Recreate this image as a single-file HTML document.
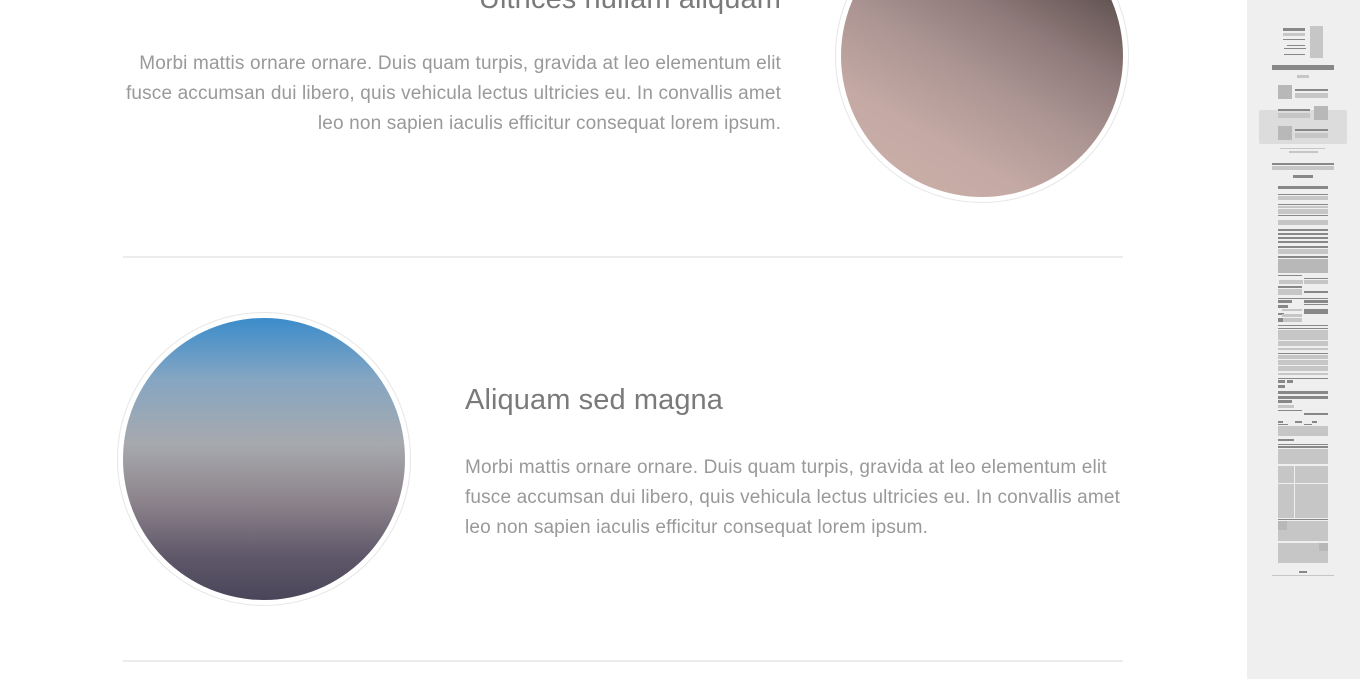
<!DOCTYPE html>
<html><head><meta charset="utf-8"><style>
html,body{margin:0;padding:0;width:1360px;height:679px;overflow:hidden;background:#fff;font-family:"Liberation Sans",Arial,sans-serif;}
.h{position:absolute;font-size:29px;color:#7a7a7a;line-height:34px;white-space:nowrap;margin:0;font-weight:normal;letter-spacing:0.1px}
.p{position:absolute;font-size:19px;color:#999;line-height:30px;white-space:nowrap;margin:0;letter-spacing:0.15px}
.hr{position:absolute;left:123px;width:1000px;height:2px;background:#ececec}
.c{position:absolute;width:294px;height:294px;border-radius:50%;border:1px solid #e6e6e6;background:#fff;box-sizing:border-box}
.c div{position:absolute;left:5px;top:5px;width:282px;height:282px;border-radius:50%}
#side{position:absolute;left:1247px;top:0;width:113px;height:679px;background:#efefef}
#side i{position:absolute;display:block}
.d{background:#888}.l{background:#c6c6c6}.m{background:#b8b8b8}
</style></head><body>
<h2 class="h" style="right:579px;top:-18px">Ultrices nullam aliquam</h2>
<p class="p" style="right:579px;top:49px;text-align:right">Morbi mattis ornare ornare. Duis quam turpis, gravida at leo elementum elit<br>fusce accumsan dui libero, quis vehicula lectus ultricies eu. In convallis amet<br>leo non sapien iaculis efficitur consequat lorem ipsum.</p>
<div class="c" style="left:835px;top:-91px"><div style="background:linear-gradient(210deg,#2c2422 0%,#5e504e 18%,#8e7a79 38%,#ab9492 55%,#c4a9a4 75%,#cdb1aa 100%)"></div></div>
<div class="hr" style="top:256px"></div>
<div class="c" style="left:117px;top:312px"><div style="background:linear-gradient(180deg,#3b8ccb 0%,#86a6c2 22%,#a7a9ad 45%,#8c838b 65%,#5e5769 85%,#4a4559 100%)"></div></div>
<h2 class="h" style="left:465px;top:383px">Aliquam sed magna</h2>
<p class="p" style="left:465px;top:453px">Morbi mattis ornare ornare. Duis quam turpis, gravida at leo elementum elit<br>fusce accumsan dui libero, quis vehicula lectus ultricies eu. In convallis amet<br>leo non sapien iaculis efficitur consequat lorem ipsum.</p>
<div class="hr" style="top:660px"></div>
<div id="side">
<i style="left:12px;top:110px;width:88px;height:34px;background:#dcdcdc;border-radius:2px"></i>
<i class="d" style="left:36px;top:28px;width:22px;height:3px"></i>
<i class="l" style="left:36px;top:33px;width:22px;height:3px"></i>
<i class="d" style="left:36px;top:39px;width:22px;height:1px"></i>
<i class="l" style="left:63px;top:26px;width:13px;height:32px"></i>
<i class="d" style="left:40px;top:45px;width:18px;height:1px"></i>
<i class="d" style="left:37px;top:48px;width:22px;height:1px"></i>
<i class="d" style="left:37px;top:54px;width:21px;height:1px"></i>
<i class="d" style="left:25px;top:65px;width:62px;height:5px"></i>
<i class="l" style="left:50px;top:75px;width:12px;height:3px"></i>
<i class="m" style="left:31px;top:85px;width:14px;height:14px"></i>
<i class="d" style="left:48px;top:89px;width:33px;height:2px"></i>
<i class="l" style="left:48px;top:93px;width:33px;height:5px"></i>
<i class="d" style="left:31px;top:109px;width:32px;height:2px"></i>
<i class="l" style="left:31px;top:113px;width:32px;height:5px"></i>
<i class="m" style="left:67px;top:106px;width:14px;height:14px"></i>
<i class="m" style="left:31px;top:126px;width:14px;height:14px"></i>
<i class="d" style="left:48px;top:129px;width:33px;height:2px"></i>
<i class="l" style="left:48px;top:133px;width:33px;height:5px"></i>
<i class="l" style="left:33px;top:148px;width:45px;height:1px"></i>
<i class="l" style="left:42px;top:151px;width:29px;height:2px"></i>
<i class="d" style="left:25px;top:163px;width:62px;height:2px"></i>
<i class="l" style="left:25px;top:166px;width:62px;height:4px"></i>
<i class="d" style="left:46px;top:175px;width:20px;height:3px"></i>
<i class="d" style="left:31px;top:186px;width:50px;height:3px"></i>
<i class="d" style="left:31px;top:194px;width:50px;height:1px"></i>
<i class="l" style="left:31px;top:196px;width:50px;height:4px"></i>
<i class="d" style="left:31px;top:204px;width:50px;height:1px"></i>
<i class="l" style="left:31px;top:206px;width:50px;height:2px"></i>
<i class="l" style="left:31px;top:209px;width:50px;height:5px"></i>
<i class="d" style="left:31px;top:215px;width:50px;height:1px"></i>
<i class="l" style="left:31px;top:220px;width:50px;height:5px"></i>
<i class="d" style="left:31px;top:229px;width:50px;height:2px"></i>
<i class="d" style="left:31px;top:233px;width:50px;height:2px"></i>
<i class="d" style="left:31px;top:237px;width:50px;height:2px"></i>
<i class="d" style="left:31px;top:241px;width:50px;height:2px"></i>
<i class="d" style="left:31px;top:246px;width:50px;height:2px"></i>
<i class="l" style="left:31px;top:249px;width:50px;height:5px"></i>
<i class="d" style="left:31px;top:256px;width:50px;height:2px"></i>
<i class="m" style="left:31px;top:259px;width:50px;height:14px"></i>
<i class="d" style="left:31px;top:275px;width:24px;height:1px"></i>
<i class="d" style="left:57px;top:278px;width:24px;height:1px"></i>
<i class="l" style="left:32px;top:280px;width:24px;height:4px"></i>
<i class="l" style="left:57px;top:280px;width:24px;height:4px"></i>
<i class="d" style="left:31px;top:286px;width:24px;height:2px"></i>
<i class="l" style="left:31px;top:289px;width:24px;height:6px"></i>
<i class="d" style="left:57px;top:291px;width:24px;height:2px"></i>
<i class="d" style="left:31px;top:298px;width:50px;height:1px"></i>
<i class="d" style="left:31px;top:300px;width:14px;height:3px"></i>
<i class="d" style="left:57px;top:300px;width:24px;height:3px"></i>
<i class="d" style="left:57px;top:304px;width:24px;height:1px"></i>
<i class="d" style="left:31px;top:305px;width:10px;height:3px"></i>
<i class="l" style="left:35px;top:309px;width:20px;height:2px"></i>
<i class="d" style="left:57px;top:309px;width:24px;height:5px"></i>
<i class="d" style="left:31px;top:313px;width:6px;height:2px"></i>
<i class="l" style="left:35px;top:314px;width:20px;height:3px"></i>
<i class="d" style="left:31px;top:318px;width:5px;height:4px"></i>
<i class="l" style="left:36px;top:318px;width:19px;height:4px"></i>
<i class="d" style="left:31px;top:325px;width:50px;height:1px"></i>
<i class="d" style="left:31px;top:328px;width:50px;height:1px"></i>
<i class="l" style="left:31px;top:330px;width:50px;height:10px"></i>
<i class="l" style="left:31px;top:341px;width:50px;height:5px"></i>
<i class="l" style="left:31px;top:348px;width:50px;height:2px"></i>
<i class="d" style="left:31px;top:353px;width:50px;height:1px"></i>
<i class="l" style="left:31px;top:355px;width:50px;height:4px"></i>
<i class="l" style="left:31px;top:360px;width:50px;height:5px"></i>
<i class="l" style="left:31px;top:366px;width:50px;height:5px"></i>
<i class="l" style="left:31px;top:373px;width:50px;height:2px"></i>
<i class="d" style="left:31px;top:378px;width:50px;height:1px"></i>
<i class="d" style="left:31px;top:380px;width:7px;height:3px"></i>
<i class="d" style="left:40px;top:380px;width:6px;height:3px"></i>
<i class="d" style="left:31px;top:385px;width:7px;height:3px"></i>
<i class="d" style="left:31px;top:391px;width:50px;height:3px"></i>
<i class="d" style="left:31px;top:396px;width:50px;height:3px"></i>
<i class="d" style="left:31px;top:400px;width:14px;height:3px"></i>
<i class="l" style="left:31px;top:405px;width:16px;height:3px"></i>
<i class="d" style="left:31px;top:410px;width:24px;height:1px"></i>
<i class="d" style="left:57px;top:413px;width:24px;height:2px"></i>
<i class="d" style="left:31px;top:421px;width:5px;height:2px"></i>
<i class="d" style="left:48px;top:421px;width:7px;height:2px"></i>
<i class="d" style="left:65px;top:421px;width:5px;height:2px"></i>
<i class="d" style="left:31px;top:424px;width:10px;height:1px"></i>
<i class="d" style="left:57px;top:424px;width:8px;height:1px"></i>
<i class="l" style="left:31px;top:426px;width:50px;height:10px"></i>
<i class="d" style="left:31px;top:439px;width:16px;height:2px"></i>
<i class="d" style="left:31px;top:444px;width:50px;height:1px"></i>
<i class="d" style="left:31px;top:446px;width:50px;height:2px"></i>
<i class="l" style="left:31px;top:449px;width:50px;height:15px"></i>
<i class="l" style="left:31px;top:466px;width:16px;height:17px"></i>
<i class="l" style="left:48px;top:466px;width:33px;height:17px"></i>
<i class="l" style="left:31px;top:484px;width:16px;height:17px"></i>
<i class="l" style="left:48px;top:484px;width:33px;height:17px"></i>
<i class="l" style="left:31px;top:501px;width:16px;height:17px"></i>
<i class="l" style="left:48px;top:501px;width:33px;height:17px"></i>
<i class="d" style="left:31px;top:519px;width:50px;height:1px"></i>
<i class="l" style="left:31px;top:521px;width:50px;height:20px"></i>
<i class="m" style="left:31px;top:521px;width:9px;height:9px"></i>
<i class="l" style="left:31px;top:543px;width:50px;height:20px"></i>
<i class="m" style="left:72px;top:543px;width:9px;height:8px"></i>
<i class="d" style="left:52px;top:571px;width:8px;height:2px"></i>
<i class="l" style="left:25px;top:575px;width:62px;height:1px"></i>
</div>
</body></html>
